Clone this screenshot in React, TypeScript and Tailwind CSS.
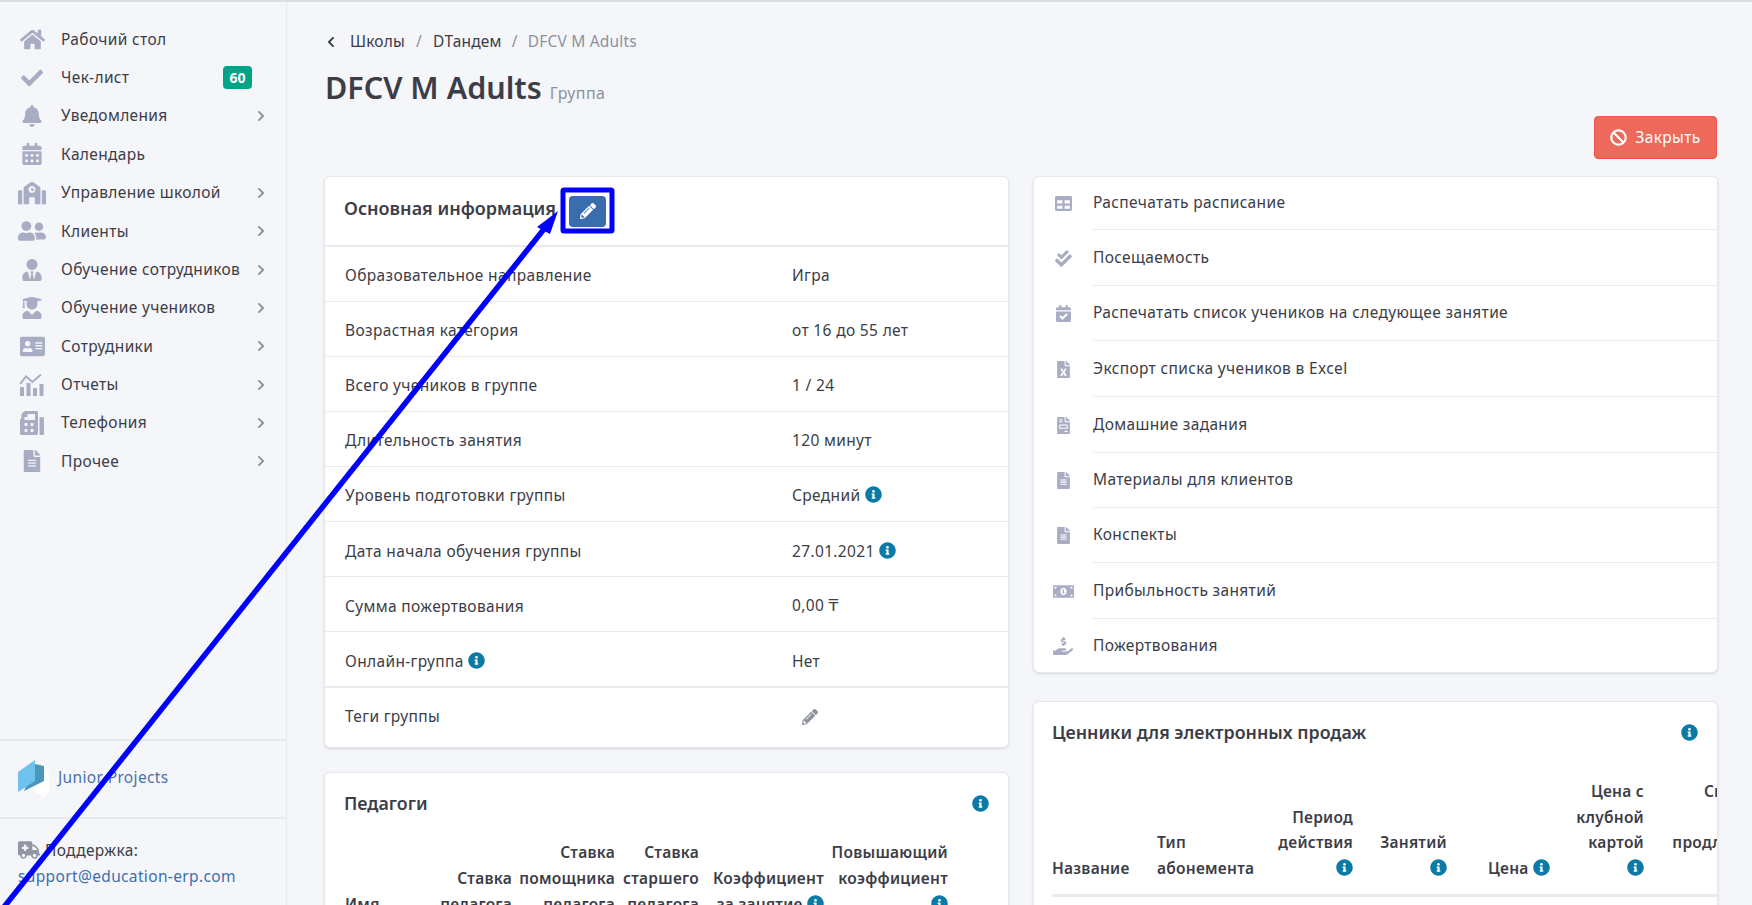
import React from "react";
import {
  FaHome, FaCheck, FaBell, FaCalendarAlt, FaSchool, FaUserFriends, FaUserTie, FaUserGraduate, FaAddressCard,
  FaFax, FaFileAlt, FaTable, FaCheckDouble, FaCalendarCheck, FaFileExcel, FaFileInvoice, FaMoneyBillAlt,
  FaHandHoldingUsd, FaAmbulance, FaBan, FaPencilAlt, FaInfoCircle, FaChevronLeft, FaChevronRight,
} from "react-icons/fa";

const ChartIcon = ({ className }: { className?: string }) => (
  <svg viewBox="0 0 26 23" className={className} fill="currentColor">
    <rect x="1" y="14" width="4" height="9" />
    <rect x="7.5" y="10" width="4" height="13" />
    <rect x="14" y="15" width="4" height="8" />
    <rect x="20.5" y="11" width="4" height="12" />
    <path d="M1 11 L7 3.5 L13.5 9 L22 1.5" fill="none" stroke="currentColor" strokeWidth="2" />
  </svg>
);

const Info = () => <FaInfoCircle className="inline-block text-[17px] text-[#0b7aa6] align-[-2px]" />;

const nav = [
  { icon: <FaHome className="text-[25px]" />, label: "Рабочий стол" },
  { icon: <FaCheck className="text-[22px]" />, label: "Чек-лист", badge: "60" },
  { icon: <FaBell className="text-[22px]" />, label: "Уведомления", arrow: true },
  { icon: <FaCalendarAlt className="text-[22px]" />, label: "Календарь" },
  { icon: <FaSchool className="text-[28px]" />, label: "Управление школой", arrow: true },
  { icon: <FaUserFriends className="text-[28px]" />, label: "Клиенты", arrow: true },
  { icon: <FaUserTie className="text-[22px]" />, label: "Обучение сотрудников", arrow: true },
  { icon: <FaUserGraduate className="text-[22px]" />, label: "Обучение учеников", arrow: true },
  { icon: <FaAddressCard className="text-[25px]" />, label: "Сотрудники", arrow: true },
  { icon: <ChartIcon className="w-[26px] h-[23px]" />, label: "Отчеты", arrow: true },
  { icon: <FaFax className="text-[24px] -scale-x-100" />, label: "Телефония", arrow: true },
  { icon: <FaFileAlt className="text-[22px]" />, label: "Прочее", arrow: true },
];

const infoRows: { label: React.ReactNode; value: React.ReactNode }[] = [
  { label: "Образовательное направление", value: "Игра" },
  { label: "Возрастная категория", value: "от 16 до 55 лет" },
  { label: "Всего учеников в группе", value: "1 / 24" },
  { label: "Длительность занятия", value: "120 минут" },
  { label: "Уровень подготовки группы", value: <>Средний <Info /></> },
  { label: "Дата начала обучения группы", value: <>27.01.2021 <Info /></> },
  { label: "Сумма пожертвования", value: <>0,00 <span className="font-['DejaVu_Sans',sans-serif]">₸</span></> },
  { label: <>Онлайн-группа <Info /></>, value: "Нет" },
];

const actions = [
  { h: "h-[54px] pb-px", icon: <FaTable />, label: "Распечатать расписание" },
  { h: "h-[55px]", icon: <FaCheckDouble />, label: "Посещаемость" },
  { h: "h-[55px]", icon: <FaCalendarCheck />, label: "Распечатать список учеников на следующее занятие" },
  { h: "h-[56px]", icon: <FaFileExcel />, label: "Экспорт списка учеников в Excel" },
  { h: "h-[56px]", icon: <FaFileInvoice />, label: "Домашние задания" },
  { h: "h-[55px]", icon: <FaFileAlt />, label: "Материалы для клиентов" },
  { h: "h-[55px]", icon: <FaFileAlt />, label: "Конспекты" },
  { h: "h-[56px]", icon: <FaMoneyBillAlt className="text-[21px]" />, label: "Прибыльность занятий" },
  { h: "h-[53px] pt-px", icon: <FaHandHoldingUsd className="text-[20px]" />, label: "Пожертвования" },
];

const Sidebar = () => (
  <aside className="w-[287px] shrink-0 h-full flex flex-col border-r border-[#e8e9ee] bg-[#f5f6f9]">
    <nav className="pt-[18px]">
      {nav.map((n) => (
        <div key={n.label} className="h-[38.4px] flex items-center">
          <span className="w-[61px] pl-[14px] pr-[11px] flex justify-center shrink-0 text-[#a9adc3]">{n.icon}</span>
          <span className="flex-1 whitespace-nowrap">{n.label}</span>
          {n.badge && (
            <span className="mr-[34px] w-[29px] h-[23px] rounded bg-[#00a488] text-white text-[14px] font-bold tracking-normal flex items-center justify-center">
              {n.badge}
            </span>
          )}
          {n.arrow && <FaChevronRight className="mr-[19px] text-[12px] text-[#8d919d]" />}
        </div>
      ))}
    </nav>
    <div className="mt-auto h-[78px] border-t-2 border-[#e8e9ee] flex items-center pl-[18px]">
      <svg viewBox="0 0 32 38" className="w-[32px] h-[38px]">
        <path d="M15 11 H31 V31 L26 38 L16 31 Z" fill="#ffffff" />
        <path d="M17 4 L26 6 V21 L6 31 Z" fill="#4a97bb" />
        <path d="M0 12 L17 0 V21 L0 32 Z" fill="#6fc1ee" />
      </svg>
      <span className="ml-[8px] pb-[3px] text-[#4a72ad]">Junior Projects</span>
    </div>
    <div className="h-[88px] border-t-2 border-[#e8e9ee] pl-[18px] pt-[18px] leading-[26px]">
      <div className="flex items-center gap-[5px]">
        <FaAmbulance className="text-[22px] text-[#9296a3]" />
        <span>Поддержка:</span>
      </div>
      <div className="text-[#3b6fb0]">support@education-erp.com</div>
    </div>
  </aside>
);

const CardTitle = ({ children }: { children: React.ReactNode }) => (
  <div className="h-[60px] flex items-center justify-between pl-[18px] pr-[19px] text-[17.8px] font-semibold tracking-normal">
    {children}
  </div>
);

const th = "align-bottom font-semibold text-right p-0 pb-[13px] tracking-[0.25px]";

const App = () => (
  <div className="relative h-[905px] overflow-hidden bg-[#f5f6f9] text-[#3c3d47] text-[15.5px] tracking-[0.35px] font-['Noto_Sans',sans-serif] flex flex-col">
    <div className="h-[2px] shrink-0 bg-[#dcdde1]" />
    <div className="flex flex-1 min-h-0">
      <Sidebar />
      <main className="flex-1 min-w-0 pl-[37px] pr-[34px] pt-[29px]">
        <div className="flex items-center h-[22px] whitespace-nowrap ml-[1px] tracking-[0.2px]">
          <FaChevronLeft className="text-[12px] mr-[13px] text-[#3c3d47]" />
          <span>Школы</span>
          <span className="mx-[11px] text-[#8d919d]">/</span>
          <span>DТандем</span>
          <span className="mx-[10px] text-[#8d919d]">/</span>
          <span className="text-[#8d919d]">DFCV M Adults</span>
        </div>
        <div className="mt-[14px] ml-[1px] flex items-baseline h-[40px]">
          <h1 className="text-[30.5px] font-semibold leading-[40px] tracking-normal">DFCV M Adults</h1>
          <span className="ml-[8px] text-[#8d919d] text-[16px]">Группа</span>
        </div>
        <div className="mt-[9px] mr-[1px] flex justify-end">
          <button className="w-[123px] h-[43px] rounded border border-[#e8574a] bg-[#ec695b] text-white flex items-center justify-center gap-[8px]">
            <FaBan className="text-[17px]" />
            Закрыть
          </button>
        </div>
        <div className="mt-[17px] grid grid-cols-2 gap-6 items-start">
          <div className="flex flex-col gap-6">
            <section className="bg-white rounded-md border border-[#e6e8ec] shadow-sm">
              <div className="h-[70px] border-b-2 border-[#e9ebef] pl-[19px] flex items-center">
                <h2 className="text-[18px] font-semibold tracking-normal pb-[6px]">Основная информация</h2>
                <button className="ml-[13px] w-[37px] h-[31px] rounded bg-[#3a6dae] text-white flex items-center justify-center">
                  <FaPencilAlt className="text-[16px]" />
                </button>
              </div>
              {infoRows.map((r, i) => (
                <div key={i} className={"h-[55px] border-b border-[#e9ebef] flex items-center pl-[20px] " + (i < 5 ? "pt-[3px]" : "pt-[5px]")}>
                  <div className="w-[447px]">{r.label}</div>
                  <div>{r.value}</div>
                </div>
              ))}
              <div className="h-[60px] border-t border-[#e9ebef] flex items-center pl-[20px] pb-[2px]">
                <div className="w-[447px]">Теги группы</div>
                <FaPencilAlt className="ml-[10px] text-[#8d919d] text-[16px]" />
              </div>
            </section>
            <section className="bg-white rounded-md border border-[#e6e8ec] shadow-sm overflow-hidden h-[300px]">
              <CardTitle>
                <span className="pl-[1px]">Педагоги</span>
                <Info />
              </CardTitle>
              <div className="pl-[20px] pt-[6px]">
                <table className="table-fixed w-[603px] leading-[26px]">
                  <colgroup>
                    <col className="w-[85px]" />
                    <col className="w-[82px]" />
                    <col className="w-[103px]" />
                    <col className="w-[84px]" />
                    <col className="w-[125px]" />
                    <col className="w-[124px]" />
                  </colgroup>
                  <thead>
                    <tr>
                      <th className={th + " !text-left"}>Имя</th>
                      <th className={th}>Ставка педагога</th>
                      <th className={th}>Ставка<br />помощника<br />педагога</th>
                      <th className={th}>Ставка<br />старшего<br />педагога</th>
                      <th className={th}>Коэффициент<br />за занятие <Info /></th>
                      <th className={th}>Повышающий<br />коэффициент<br /><Info /></th>
                    </tr>
                  </thead>
                </table>
              </div>
            </section>
          </div>
          <div className="flex flex-col gap-[28px]">
            <section className="bg-white rounded-md border border-[#e6e8ec] shadow-sm">
              {actions.map((a, i) => (
                <div key={a.label} className={"flex items-center " + a.h}>
                  <span className="w-[59px] pr-[1px] flex justify-center shrink-0 text-[#a9adc3] text-[17px]">{a.icon}</span>
                  <span className={"flex-1 h-full flex items-center " + (i === 8 ? "" : "border-b border-[#e9ebef]")}>{a.label}</span>
                </div>
              ))}
            </section>
            <section className="bg-white rounded-md border border-[#e6e8ec] shadow-sm overflow-hidden h-[300px]">
              <CardTitle>
                <span>Ценники для электронных продаж</span>
                <Info />
              </CardTitle>
              <div className="pl-[18px] pt-[17px]">
                <table className="table-fixed w-[710px] leading-[25.5px] border-b-[3px] border-[#e9ebef]">
                  <colgroup>
                    <col className="w-[105px]" />
                    <col className="w-[113px]" />
                    <col className="w-[83px]" />
                    <col className="w-[94px]" />
                    <col className="w-[113px]" />
                    <col className="w-[84px]" />
                    <col className="w-[118px]" />
                  </colgroup>
                  <thead>
                    <tr>
                      <th className={th + " !text-left"}>Название</th>
                      <th className={th + " !text-left"}>Тип<br />абонемента</th>
                      <th className={th}>Период<br />действия<br /><Info /></th>
                      <th className={th}>Занятий<br /><Info /></th>
                      <th className={th + " !text-left pl-[41px]"}>Цена <Info /></th>
                      <th className={th}>Цена с<br />клубной<br />картой<br /><Info /></th>
                      <th className={th}>Скидка<br />при<br />продлении<br /><br /></th>
                    </tr>
                  </thead>
                </table>
              </div>
            </section>
          </div>
        </div>
      </main>
    </div>
    <svg className="absolute inset-0 w-[1752px] h-[905px] pointer-events-none" viewBox="0 0 1752 905">
      <line x1="0" y1="912" x2="548" y2="224" stroke="#0000ff" strokeWidth="5.5" />
      <polygon points="558,211 537,227 550,234" fill="#0000ff" />
      <rect x="563" y="190" width="49" height="41" fill="none" stroke="#0000ff" strokeWidth="5" rx="1" />
    </svg>
  </div>
);

export default App;
